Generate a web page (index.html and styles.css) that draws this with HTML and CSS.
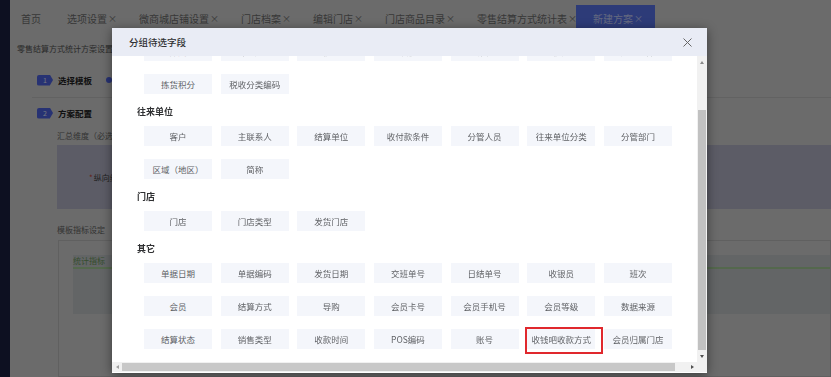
FILE: index.html
```html
<!DOCTYPE html>
<html>
<head>
    <meta charset="utf-8">
    <title>零售结算方式统计方案设置</title>
    <link rel="stylesheet" href="styles.css">
</head>
<body>

<div class="app">
    <aside class="sidebar"></aside>

    <div class="main">
        <div class="topline"></div>
        <nav class="tabs">
            <span class="tab tab-home">首页</span>
            <span class="tab">选项设置 <i class="tab-close">×</i></span>
            <span class="tab">微商城店铺设置 <i class="tab-close">×</i></span>
            <span class="tab">门店档案 <i class="tab-close">×</i></span>
            <span class="tab">编辑门店 <i class="tab-close">×</i></span>
            <span class="tab">门店商品目录 <i class="tab-close">×</i></span>
            <span class="tab">零售结算方式统计表 <i class="tab-close">×</i></span>
            <span class="tab active">新建方案 <i class="tab-close">×</i></span>
        </nav>

        <div class="page">
            <div class="page-title">零售结算方式统计方案设置</div>

            <div class="step">
                <span class="step-no">1</span>
                <span class="step-name">选择模板</span>
                <span class="radio"></span>
            </div>
            <div class="step-divider"></div>
            <div class="step">
                <span class="step-no">2</span>
                <span class="step-name">方案配置</span>
            </div>

            <div class="form-label">汇总维度（必选）</div>
            <div class="dim-box"><span class="req">*</span>纵向维度</div>

            <div class="form-label">模板指标设定</div>
            <div class="metric-box">
                <div class="metric-table">
                    <div class="metric-head">统计指标</div>
                </div>
            </div>
        </div>
    </div>
</div>

<div class="mask"></div>

<div class="dialog">
    <div class="dialog-header">
        <span class="dialog-title">分组待选字段</span>
        <svg class="dialog-close" width="9" height="9" viewBox="0 0 9 9">
            <path d="M0.5 0.5 L8.5 8.5 M8.5 0.5 L0.5 8.5" stroke="#666" stroke-width="1" fill="none"/>
        </svg>
    </div>

    <div class="dialog-body">
        <div class="dialog-content">
            <div class="field-list">

                <!-- rest of the goods group, scrolled up under the header -->
                <section class="group group-cont">
                    <div class="field-grid">
                        <span class="field">商品类型</span>
                        <span class="field">计价方式</span>
                        <span class="field">税率</span>
                        <span class="field">进项税率</span>
                        <span class="field">会员价</span>
                        <span class="field">积分</span>
                        <span class="field">是否赠品</span>
                        <span class="field">拣货积分</span>
                        <span class="field">税收分类编码</span>
                    </div>
                </section>

                <section class="group">
                    <h4 class="group-title">往来单位</h4>
                    <div class="field-grid">
                        <span class="field">客户</span>
                        <span class="field">主联系人</span>
                        <span class="field">结算单位</span>
                        <span class="field">收付款条件</span>
                        <span class="field">分管人员</span>
                        <span class="field">往来单位分类</span>
                        <span class="field">分管部门</span>
                        <span class="field">区域（地区）</span>
                        <span class="field">简称</span>
                    </div>
                </section>

                <section class="group">
                    <h4 class="group-title">门店</h4>
                    <div class="field-grid">
                        <span class="field">门店</span>
                        <span class="field">门店类型</span>
                        <span class="field">发货门店</span>
                    </div>
                </section>

                <section class="group">
                    <h4 class="group-title">其它</h4>
                    <div class="field-grid">
                        <span class="field">单据日期</span>
                        <span class="field">单据编码</span>
                        <span class="field">发货日期</span>
                        <span class="field">交班单号</span>
                        <span class="field">日结单号</span>
                        <span class="field">收银员</span>
                        <span class="field">班次</span>
                        <span class="field">会员</span>
                        <span class="field">结算方式</span>
                        <span class="field">导购</span>
                        <span class="field">会员卡号</span>
                        <span class="field">会员手机号</span>
                        <span class="field">会员等级</span>
                        <span class="field">数据来源</span>
                        <span class="field">结算状态</span>
                        <span class="field">销售类型</span>
                        <span class="field">收款时间</span>
                        <span class="field">POS编码</span>
                        <span class="field">账号</span>
                        <span class="field marked">收钱吧收款方式</span>
                        <span class="field">会员归属门店</span>
                    </div>
                </section>

            </div>
        </div>

        <div class="vbar">
            <span class="sb-btn"><i class="arrow arrow-up"></i></span>
            <span class="vbar-track"><span class="vbar-thumb"></span></span>
            <span class="sb-btn"><i class="arrow arrow-down"></i></span>
        </div>
        <div class="hbar">
            <span class="sb-btn"><i class="arrow arrow-left"></i></span>
            <span class="hbar-track"><span class="hbar-thumb"></span></span>
            <span class="sb-btn"><i class="arrow arrow-right"></i></span>
        </div>
        <div class="sb-corner"></div>
    </div>
</div>

</body>
</html>
```

FILE: styles.css
```css
html, body { margin: 0; padding: 0; }
body { width: 831px; height: 377px; overflow: hidden; font-family: "Noto Sans CJK SC", "Noto Sans", sans-serif; background: #d6d6d6; }

/* page under the mask */
.app { display: flex; height: 377px; }
.sidebar { width: 10px; background: #1a2142; flex: none; }
.main { flex: 1; display: flex; flex-direction: column; background: #d6d6d6; min-width: 0; }
.topline { height: 5px; }

.tabs { display: flex; height: 30px; align-items: stretch; font-size: 10px; color: #707070; white-space: nowrap; }
.tab { display: flex; align-items: center; flex: none; padding: 0 11px; }
.tab-home { margin-right: 4px; }
.tab-close { font-style: normal; margin-left: 1px; font-size: 9px; }
.tab.active { background: #5a76f0; color: #c8d2ff; margin-left: -12px; padding: 0 12px 0 17px; }

.page { padding: 10px 0 0 7px; color: #555; }
.page-title { font-size: 8px; line-height: 14px; color: #555; }

.step { display: flex; align-items: center; height: 12px; margin-top: 18px; padding-left: 20px; }
.step-no { width: 16px; height: 11px; background: #4f64e6; color: #e8ecff; font-size: 7px; line-height: 11px; text-align: center; clip-path: polygon(0 0, 80% 0, 100% 50%, 80% 100%, 0 100%); border-radius: 2px 0 0 2px; }
.step-name { margin-left: 5px; font-size: 8.5px; font-weight: bold; color: #222; }
.radio { width: 6px; height: 6px; border-radius: 50%; background: #4f64e6; margin-left: 14px; }
.step-divider { margin: 11px 0 0 15px; border-top: 1px solid #c4c4c4; }
.step-divider + .step { margin-top: 9px; }

.form-label { margin: 11px 0 0 40px; font-size: 8px; line-height: 12px; color: #666; }
.dim-box { margin: 3px 0 0 40px; height: 64px; background: #b8b8cc; display: flex; align-items: center; padding-left: 32px; font-size: 8px; color: #444; }
.dim-box .req { color: #c43; margin-right: 1px; }
.dim-box + .form-label { margin-top: 15px; }
.metric-box { margin: 4px 0 0 41px; height: 121px; border: 1px solid #c0c0c0; padding: 14px 0 0 14px; }
.metric-table { height: 59px; background: #c6cacd; }
.metric-head { height: 12px; border-bottom: 2px solid #a8d09a; font-size: 8px; line-height: 12px; color: #6c9a5c; }

.mask { position: fixed; left: 0; top: 0; right: 0; bottom: 0; background: rgba(0, 0, 0, 0.5); }

/* dialog */
.dialog { position: absolute; left: 112px; top: 28px; width: 595px; height: 345px; background: #fff; box-shadow: 0 2px 10px rgba(0, 0, 0, 0.45); display: flex; flex-direction: column; }
.dialog-header { height: 28px; flex: none; background: #e9ecf5; display: flex; align-items: center; justify-content: space-between; padding: 0 15px 0 17px; }
.dialog-title { font-size: 9.5px; font-weight: 500; color: #303133; }
.dialog-close { display: block; }

.dialog-body { display: grid; grid-template-columns: 1fr 10px; grid-template-rows: 306px 10px; padding-bottom: 1px; }
.dialog-content { overflow: hidden; padding-left: 25px; }
.field-list { margin-top: -15px; }

.group { padding-top: 12px; }
.group-cont { padding-top: 0; }
.group-title { margin: 0 0 8px; font-size: 9px; line-height: 12px; font-weight: bold; color: #303133; }
.field-grid { display: grid; grid-template-columns: repeat(7, 68px); column-gap: 8.67px; row-gap: 13px; padding-left: 7px; }
.field { position: relative; height: 20px; line-height: 20px; text-align: center; background: #f4f6fb; font-size: 8.5px; color: #606266; white-space: nowrap; }
.field.marked::after { content: ''; position: absolute; left: -2px; top: -2px; right: -8px; bottom: -5px; border: 2px solid #e0282d; }

/* scrollbars */
.vbar { display: flex; flex-direction: column; background: #f1f1f1; }
.hbar { display: flex; background: #f1f1f1; }
.sb-corner { background: #f1f1f1; }
.sb-btn { flex: none; width: 10px; height: 12px; display: flex; align-items: center; justify-content: center; }
.hbar .sb-btn { height: 10px; }
.vbar-track { flex: 1; display: flex; flex-direction: column; justify-content: flex-end; }
.vbar-thumb { height: 240px; margin: 0 1px; background: #c1c1c1; }
.hbar-track { flex: 1; display: flex; }
.hbar-thumb { width: 553px; margin: 1px 0; background: #c8c8c8; }
.arrow { width: 0; height: 0; border: 2.5px solid transparent; }
.arrow-up { border-bottom: 3px solid #8a8a8a; border-top: 0; }
.arrow-down { border-top: 3px solid #505050; border-bottom: 0; }
.arrow-left { border-right: 3px solid #a0a0a0; border-left: 0; }
.arrow-right { border-left: 3px solid #505050; border-right: 0; }
```
